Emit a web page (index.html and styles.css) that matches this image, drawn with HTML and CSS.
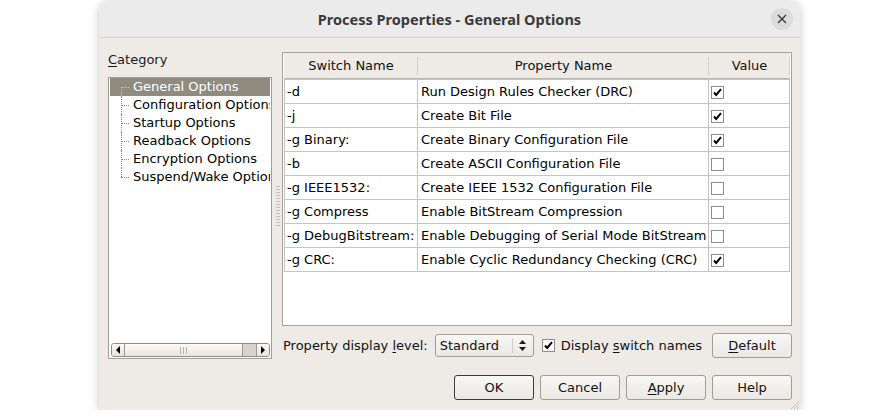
FILE: index.html
```html
<!DOCTYPE html>
<html>
<head>
<meta charset="utf-8">
<title>Process Properties - General Options</title>
<link rel="stylesheet" href="styles.css">
</head>
<body>
<div class="window">
  <div class="titlebar">
    <div class="title">Process Properties - General Options</div>
    <div class="close">
      <svg width="10" height="10" viewBox="0 0 10 10"><path d="M1 1L9 9M9 1L1 9" stroke="#3a3a3a" stroke-width="1.4" fill="none"/></svg>
    </div>
  </div>
  <div class="content">
    <div class="main">
      <div class="leftcol">
        <div class="cat-label"><u>C</u>ategory</div>
        <div class="tree">
          <ul class="tree-list">
            <li class="sel first">General Options</li>
            <li>Configuration Options</li>
            <li>Startup Options</li>
            <li>Readback Options</li>
            <li>Encryption Options</li>
            <li class="last">Suspend/Wake Options</li>
          </ul>
          <div class="hscroll">
            <div class="sb-btn"><span class="tri-left"></span></div>
            <div class="sb-handle"><span class="grip-lines"></span></div>
            <div class="sb-track"></div>
            <div class="sb-btn"><span class="tri-right"></span></div>
          </div>
        </div>
      </div>
      <div class="splitter"><div class="split-grip"></div></div>
      <div class="rightcol">
        <div class="table-frame">
          <div class="thead">
            <div class="th">Switch Name</div>
            <div class="th">Property Name</div>
            <div class="th">Value</div>
          </div>
          <div class="tbody">
            <div class="td c1">-d</div><div class="td c2">Run Design Rules Checker (DRC)</div><div class="td c3"><span class="cb on"></span></div>
            <div class="td c1">-j</div><div class="td c2">Create Bit File</div><div class="td c3"><span class="cb on"></span></div>
            <div class="td c1">-g Binary:</div><div class="td c2">Create Binary Configuration File</div><div class="td c3"><span class="cb on"></span></div>
            <div class="td c1">-b</div><div class="td c2">Create ASCII Configuration File</div><div class="td c3"><span class="cb"></span></div>
            <div class="td c1">-g IEEE1532:</div><div class="td c2">Create IEEE 1532 Configuration File</div><div class="td c3"><span class="cb"></span></div>
            <div class="td c1">-g Compress</div><div class="td c2">Enable BitStream Compression</div><div class="td c3"><span class="cb"></span></div>
            <div class="td c1">-g DebugBitstream:</div><div class="td c2">Enable Debugging of Serial Mode BitStream</div><div class="td c3"><span class="cb"></span></div>
            <div class="td c1">-g CRC:</div><div class="td c2">Enable Cyclic Redundancy Checking (CRC)</div><div class="td c3"><span class="cb on"></span></div>
          </div>
        </div>
        <div class="controls">
          <span class="lbl">Property display <u>l</u>evel:</span>
          <div class="combo">
            <span class="combo-text">Standard</span>
            <span class="combo-arrows">
              <svg width="9" height="13" viewBox="0 0 9 13"><path d="M4.5 1L8 5H1Z M4.5 12L8 8H1Z" fill="#1a1a1a"/></svg>
            </span>
          </div>
          <span class="cb on small"></span>
          <span class="lbl cb-lbl">Display <u>s</u>witch names</span>
          <button class="btn push-right"><u>D</u>efault</button>
        </div>
      </div>
    </div>
    <div class="buttons">
      <button class="btn default">OK</button>
      <button class="btn">Cancel</button>
      <button class="btn"><u>A</u>pply</button>
      <button class="btn">Help</button>
    </div>
  </div>
  <svg class="resize-grip" width="11" height="11" viewBox="0 0 11 11">
    <path d="M10 2L2 10M10 5L5 10M10 8L8 10" stroke="#c9c5be" stroke-width="1" fill="none"/>
  </svg>
</div>
</body>
</html>
```

FILE: styles.css
```css
html, body {
  margin: 0;
  padding: 0;
  background: #ffffff;
}

body {
  font-family: "DejaVu Sans", "Liberation Sans", sans-serif;
  font-size: 13px;
  color: #111;
}

.window {
  position: relative;
  margin: 1px 0 0 99px;
  width: 701px;
  height: 409px;
  border-radius: 10px 10px 0 0;
  overflow: hidden;
  box-shadow: 0 1px 10px rgba(0, 0, 0, 0.22);
  display: flex;
  flex-direction: column;
}

.titlebar {
  height: 36px;
  flex: 0 0 36px;
  background: #ebebeb;
  border-bottom: 1px solid #d2d2d2;
  display: grid;
  grid-template-columns: 1fr auto 1fr;
  align-items: center;
}

.title {
  grid-column: 2;
  font-family: "Noto Sans", "DejaVu Sans", sans-serif;
  font-weight: 700;
  font-size: 14.5px;
  color: #3a3a3a;
  letter-spacing: 0;
}

.close {
  grid-column: 3;
  justify-self: end;
  margin-right: 7px;
  width: 22px;
  height: 22px;
  border-radius: 50%;
  background: #dcdcdc;
  display: flex;
  align-items: center;
  justify-content: center;
}

.content {
  flex: 1;
  background: #eeebe7;
  padding: 14px 8px 10px 9px;
  display: flex;
  flex-direction: column;
}

.main {
  display: flex;
  height: 307px;
}

.leftcol {
  width: 164px;
  display: flex;
  flex-direction: column;
}

.cat-label {
  height: 25px;
  line-height: 16px;
  color: #1a1a1a;
}

u {
  text-decoration: underline;
  text-underline-offset: 2px;
}

.tree {
  flex: 1;
  border: 1px solid #a29e97;
  background: #fff;
  display: flex;
  flex-direction: column;
  padding: 0 1px 0 0;
}

.tree-list {
  list-style: none;
  margin: 0;
  padding: 0 0 0 1px;
  overflow: hidden;
}

.tree-list li {
  position: relative;
  height: 18px;
  line-height: 18px;
  padding-left: 23px;
  white-space: nowrap;
  overflow: hidden;
  color: #000;
}

.tree-list li::before {
  content: "";
  position: absolute;
  left: 11px;
  top: 9px;
  width: 8px;
  border-top: 1px dotted #8a8a8a;
}

.tree-list li::after {
  content: "";
  position: absolute;
  left: 11px;
  top: 0;
  height: 18px;
  border-left: 1px dotted #8a8a8a;
}

.tree-list li.first::after {
  top: 9px;
  height: 9px;
}

.tree-list li.last::after {
  height: 9px;
}

.tree-list li.sel {
  background: #8f8b7f;
  color: #fff;
}

.tree-list li.sel::before {
  border-top-color: #c9c6bd;
}

.tree-list li.sel::after {
  border-left-color: #c9c6bd;
}

.hscroll {
  margin: auto 0 1px 2px;
  height: 14px;
  display: flex;
  border: 1px solid #8f8b85;
  border-radius: 3px;
  overflow: hidden;
  box-sizing: border-box;
}

.sb-btn {
  flex: 0 0 12px;
  background: linear-gradient(#faf9f7, #e6e3de);
  display: flex;
  align-items: center;
  justify-content: center;
}

.tri-left {
  width: 0;
  height: 0;
  border-top: 4px solid transparent;
  border-bottom: 4px solid transparent;
  border-right: 4px solid #000;
}

.tri-right {
  width: 0;
  height: 0;
  border-top: 4px solid transparent;
  border-bottom: 4px solid transparent;
  border-left: 4px solid #000;
}

.sb-handle {
  flex: 0 0 119px;
  box-sizing: border-box;
  border-left: 1px solid #9c9891;
  border-right: 1px solid #9c9891;
  background: linear-gradient(#faf9f7, #e9e6e1);
  display: flex;
  align-items: center;
  justify-content: center;
}

.grip-lines {
  width: 7px;
  height: 7px;
  background: repeating-linear-gradient(90deg, #b5b1aa 0 1px, transparent 1px 3px);
}

.sb-track {
  flex: 1;
  background: #d8d2ca;
  border-right: 1px solid #9c9891;
}

.splitter {
  width: 10px;
  display: flex;
  align-items: center;
  justify-content: center;
}

.split-grip {
  width: 4px;
  height: 40px;
  margin-left: 1px;
  background: repeating-linear-gradient(180deg, #c3bfb8 0 1px, transparent 1px 3px);
}

.rightcol {
  width: 510px;
  display: flex;
  flex-direction: column;
}

.table-frame {
  height: 274px;
  box-sizing: border-box;
  border: 1px solid #a6a29b;
  background: #fff;
  padding: 0 1px;
  display: flex;
  flex-direction: column;
}

.thead {
  display: grid;
  grid-template-columns: 134px 291px 81px;
  height: 25px;
  background: #eeebe7;
  border-bottom: 1px solid #b9b6b0;
}

.th {
  text-align: center;
  line-height: 25px;
  color: #111;
  background: linear-gradient(#d3cfc8, #d3cfc8) right 4px / 1px 18px no-repeat;
}

.tbody {
  display: grid;
  grid-template-columns: 133px 291px 81px;
  grid-auto-rows: 24px;
  border-left: 1px solid #c4c4c4;
  border-top: 1px solid #c4c4c4;
}

.td {
  box-sizing: border-box;
  border-right: 1px solid #c4c4c4;
  border-bottom: 1px solid #c4c4c4;
  line-height: 23px;
  white-space: nowrap;
  overflow: hidden;
  color: #000;
}

.c1 { padding-left: 2px; }
.c2 { padding-left: 3px; }
.c3 {
  padding-left: 2px;
  display: flex;
  align-items: center;
}

.cb {
  display: inline-block;
  width: 13px;
  height: 13px;
  box-sizing: border-box;
  border: 1px solid #8e8e8e;
  background: #fff;
  position: relative;
  margin-top: 1px;
}

.cb.on {
  background: #fff url("data:image/svg+xml,%3Csvg xmlns='http://www.w3.org/2000/svg' width='11' height='11' viewBox='0 0 11 11'%3E%3Cpath d='M2 5.5L4.2 8L9 2.2' stroke='%23000' stroke-width='2' fill='none'/%3E%3C/svg%3E") center / 11px 11px no-repeat;
}

.controls {
  margin-top: 7px;
  height: 25px;
  display: flex;
  align-items: center;
}

.lbl {
  white-space: nowrap;
  color: #111;
  padding-left: 1px;
}

.combo {
  margin-left: 7px;
  width: 99px;
  height: 23px;
  box-sizing: border-box;
  border: 1px solid #a19d96;
  border-radius: 3px;
  background: linear-gradient(#f8f7f5, #ebe8e4);
  display: flex;
  align-items: center;
}

.combo-text {
  flex: 1;
  padding-left: 4px;
}

.combo-arrows {
  width: 20px;
  height: 15px;
  border-left: 1px solid #d1cdc6;
  display: flex;
  align-items: center;
  justify-content: center;
}

.cb.small {
  margin-left: 8px;
  margin-top: 0;
}

.cb-lbl {
  margin-left: 5px;
}

.btn {
  width: 80px;
  height: 25px;
  box-sizing: border-box;
  border: 1px solid #a19d96;
  border-radius: 3px;
  background: linear-gradient(#f8f7f5, #ebe8e4);
  font-family: "DejaVu Sans", "Liberation Sans", sans-serif;
  font-size: 13px;
  color: #111;
  padding: 0;
}

.btn.default {
  border-color: #3b3b3b;
}

.push-right {
  margin-left: auto;
}

.buttons {
  margin-top: 16px;
  display: flex;
  justify-content: flex-end;
  gap: 6px;
}

.resize-grip {
  position: absolute;
  right: 0;
  bottom: 0;
}
```
